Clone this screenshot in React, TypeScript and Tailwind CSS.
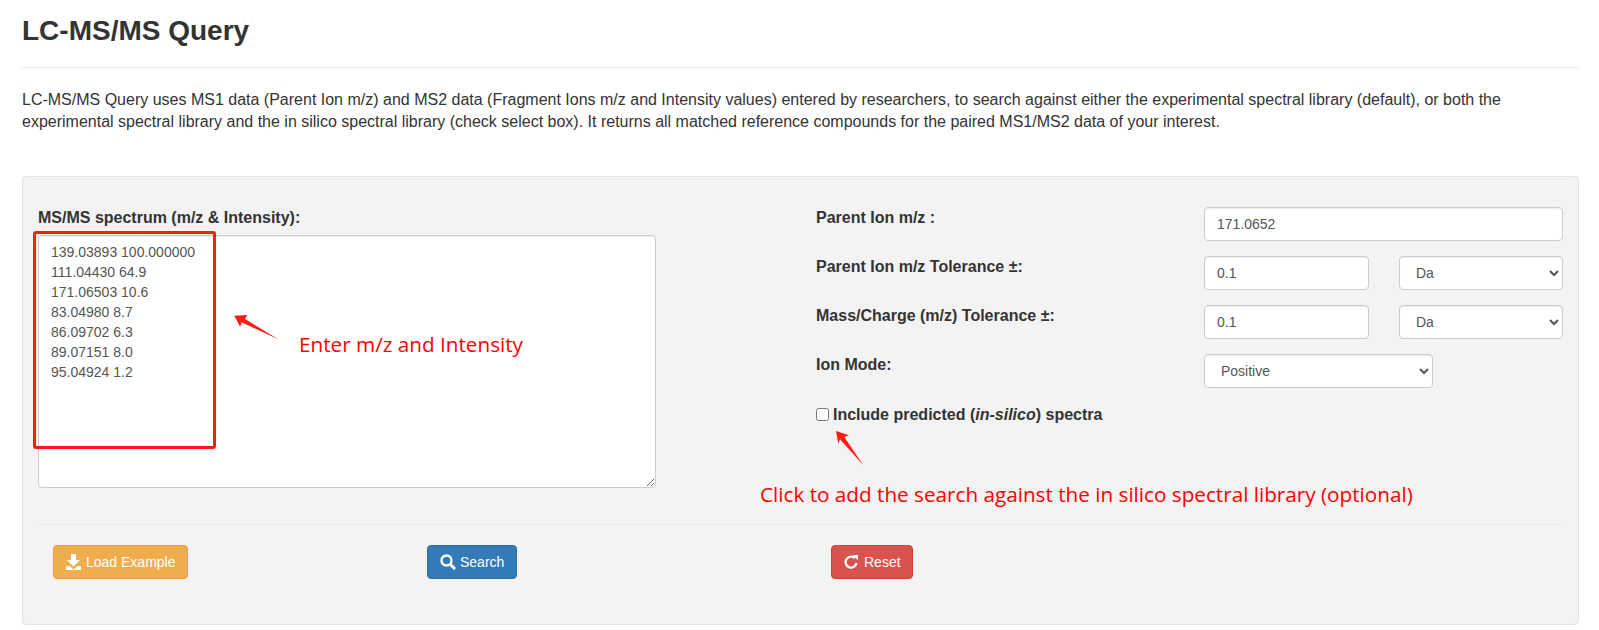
const inputClass = 'h-[34px] rounded border border-[#ccc] bg-white px-3 text-sm text-[#555] shadow-[inset_0_1px_1px_rgba(0,0,0,0.075)]';
const btnClass = 'flex h-[34px] w-fit items-center rounded border pl-3 text-sm text-white';

const spectrum = `139.03893 100.000000
111.04430 64.9
171.06503 10.6
83.04980 8.7
86.09702 6.3
89.07151 8.0
95.04924 1.2`;

function DownloadIcon() {
  return (
    <svg viewBox="0 0 15 16" className="mr-[5px] h-4 w-[15px] fill-white">
      <path d="M5 0h5v6h4l-6.500 6.500L1 6h4z" />
      <path d="M0 12h3.500l4 3.500 4-3.500H15v4H0z" />
    </svg>
  );
}

function SearchIcon() {
  return (
    <svg viewBox="0 0 16 16" className="mr-1 h-4 w-4 fill-none stroke-white">
      <circle cx="6.500" cy="6.500" r="5" strokeWidth="2.400" />
      <path d="M10.500 10.500L15 15" strokeWidth="3" />
    </svg>
  );
}

function RepeatIcon() {
  return (
    <svg viewBox="0 0 14 16" className="mr-[6px] h-4 w-[14px]">
      <path d="M11 4.200A5.500 5.500 0 1 0 12.500 9" className="fill-none stroke-white" strokeWidth="2.200" />
      <path d="M9 1h5v5.500z" className="fill-white" />
    </svg>
  );
}

export default function App() {
  return (
    <div className="relative h-[630px] overflow-hidden bg-white pr-5 pl-[22px] font-['Liberation_Sans',Arial,sans-serif] text-base text-[#333]">
      <h2 className="h-[68px] border-b border-[#eee] pt-[15px] text-[28px] leading-[32px] font-bold">LC-MS/MS Query</h2>
      <p className="mt-[21px] leading-[22px]">
        LC-MS/MS Query uses MS1 data (Parent Ion m/z) and MS2 data (Fragment Ions m/z and Intensity values) entered by researchers, to search against either the experimental spectral library (default), or both the experimental spectral library and the in silico spectral library (check select box). It returns all matched reference compounds for the paired MS1/MS2 data of your interest.
      </p>

      <div className="mt-[43px] h-[449px] rounded border border-[#e3e3e3] bg-[#f3f3f3] px-[15px] pt-[30px]">
        <div className="flex gap-[160px]">
          <div className="w-[618px] shrink-0">
            <label className="mb-[6px] block font-bold leading-[22px]">MS/MS spectrum (m/z &amp; Intensity):</label>
            <textarea
              defaultValue={spectrum}
              className="block h-[253px] w-full rounded border border-[#ccc] bg-white px-3 py-1.5 text-sm leading-5 text-[#555] shadow-[inset_0_1px_1px_rgba(0,0,0,0.075)]"
            />
          </div>

          <div className="flex w-[747px] shrink-0 flex-col gap-[15px]">
            <div className="flex items-start">
              <label className="w-[388px] font-bold leading-[22px]">Parent Ion m/z :</label>
              <input defaultValue="171.0652" className={`${inputClass} w-[359px]`} />
            </div>
            <div className="flex items-start">
              <label className="w-[388px] font-bold leading-[22px]">Parent Ion m/z Tolerance ±:</label>
              <input defaultValue="0.1" className={`${inputClass} w-[165px]`} />
              <select className={`${inputClass} ml-[30px] w-[164px]`}>
                <option>Da</option>
              </select>
            </div>
            <div className="flex items-start">
              <label className="w-[388px] font-bold leading-[22px]">Mass/Charge (m/z) Tolerance ±:</label>
              <input defaultValue="0.1" className={`${inputClass} w-[165px]`} />
              <select className={`${inputClass} ml-[30px] w-[164px]`}>
                <option>Da</option>
              </select>
            </div>
            <div className="flex items-start">
              <label className="w-[388px] font-bold leading-[22px]">Ion Mode:</label>
              <select className={`${inputClass} w-[229px]`}>
                <option>Positive</option>
              </select>
            </div>
            <label className="flex items-start font-bold leading-6">
              <input type="checkbox" className="mt-[5px] mr-1 h-[13px] w-[13px]" />
              <span>Include predicted (<em>in-silico</em>) spectra</span>
            </label>
          </div>
        </div>

        <div className="mt-[36px] border-t border-[#eaeaea] pt-5">
          <div className="grid grid-cols-[374px_404px_1fr] pl-[15px]">
            <button className={`${btnClass} border-[#eea236] bg-[#f0ad4e] pr-[11px]`}><DownloadIcon />Load Example</button>
            <button className={`${btnClass} border-[#2e6da4] bg-[#337ab7] pr-3`}><SearchIcon />Search</button>
            <button className={`${btnClass} border-[#d43f3a] bg-[#d9534f] pr-[11px]`}><RepeatIcon />Reset</button>
          </div>
        </div>
      </div>

      {/* red annotations drawn over the form */}
      <div className="pointer-events-none absolute top-[231px] left-[33px] h-[218px] w-[183px] rounded-[3px] border-[3px] border-[#ff1a12]" />
      <svg viewBox="0 0 50 30" className="absolute top-[313px] left-[232px] h-[30px] w-[50px] fill-[#ff1a12]">
        <path d="M2.300 2.700L15.300 2L13 6L46.300 26.300L9.700 9.300L8 13.700z" />
      </svg>
      <span className="absolute top-[330px] left-[299px] font-['Open_Sans',sans-serif] text-[20.700px] leading-7 text-[#ff0000]">Enter m/z and Intensity</span>
      <svg viewBox="0 0 30 40" className="absolute top-[429px] left-[834px] h-10 w-[30px] fill-[#ff1a12]">
        <path d="M2 2L15 6.300L10.300 8L29.300 36.300L6 10.300L4.300 14.700z" />
      </svg>
      <span className="absolute top-[480px] left-[760px] font-['Open_Sans',sans-serif] text-[20.700px] leading-7 text-[#ff0000]">Click to add the search against the in silico spectral library (optional)</span>
    </div>
  );
}
